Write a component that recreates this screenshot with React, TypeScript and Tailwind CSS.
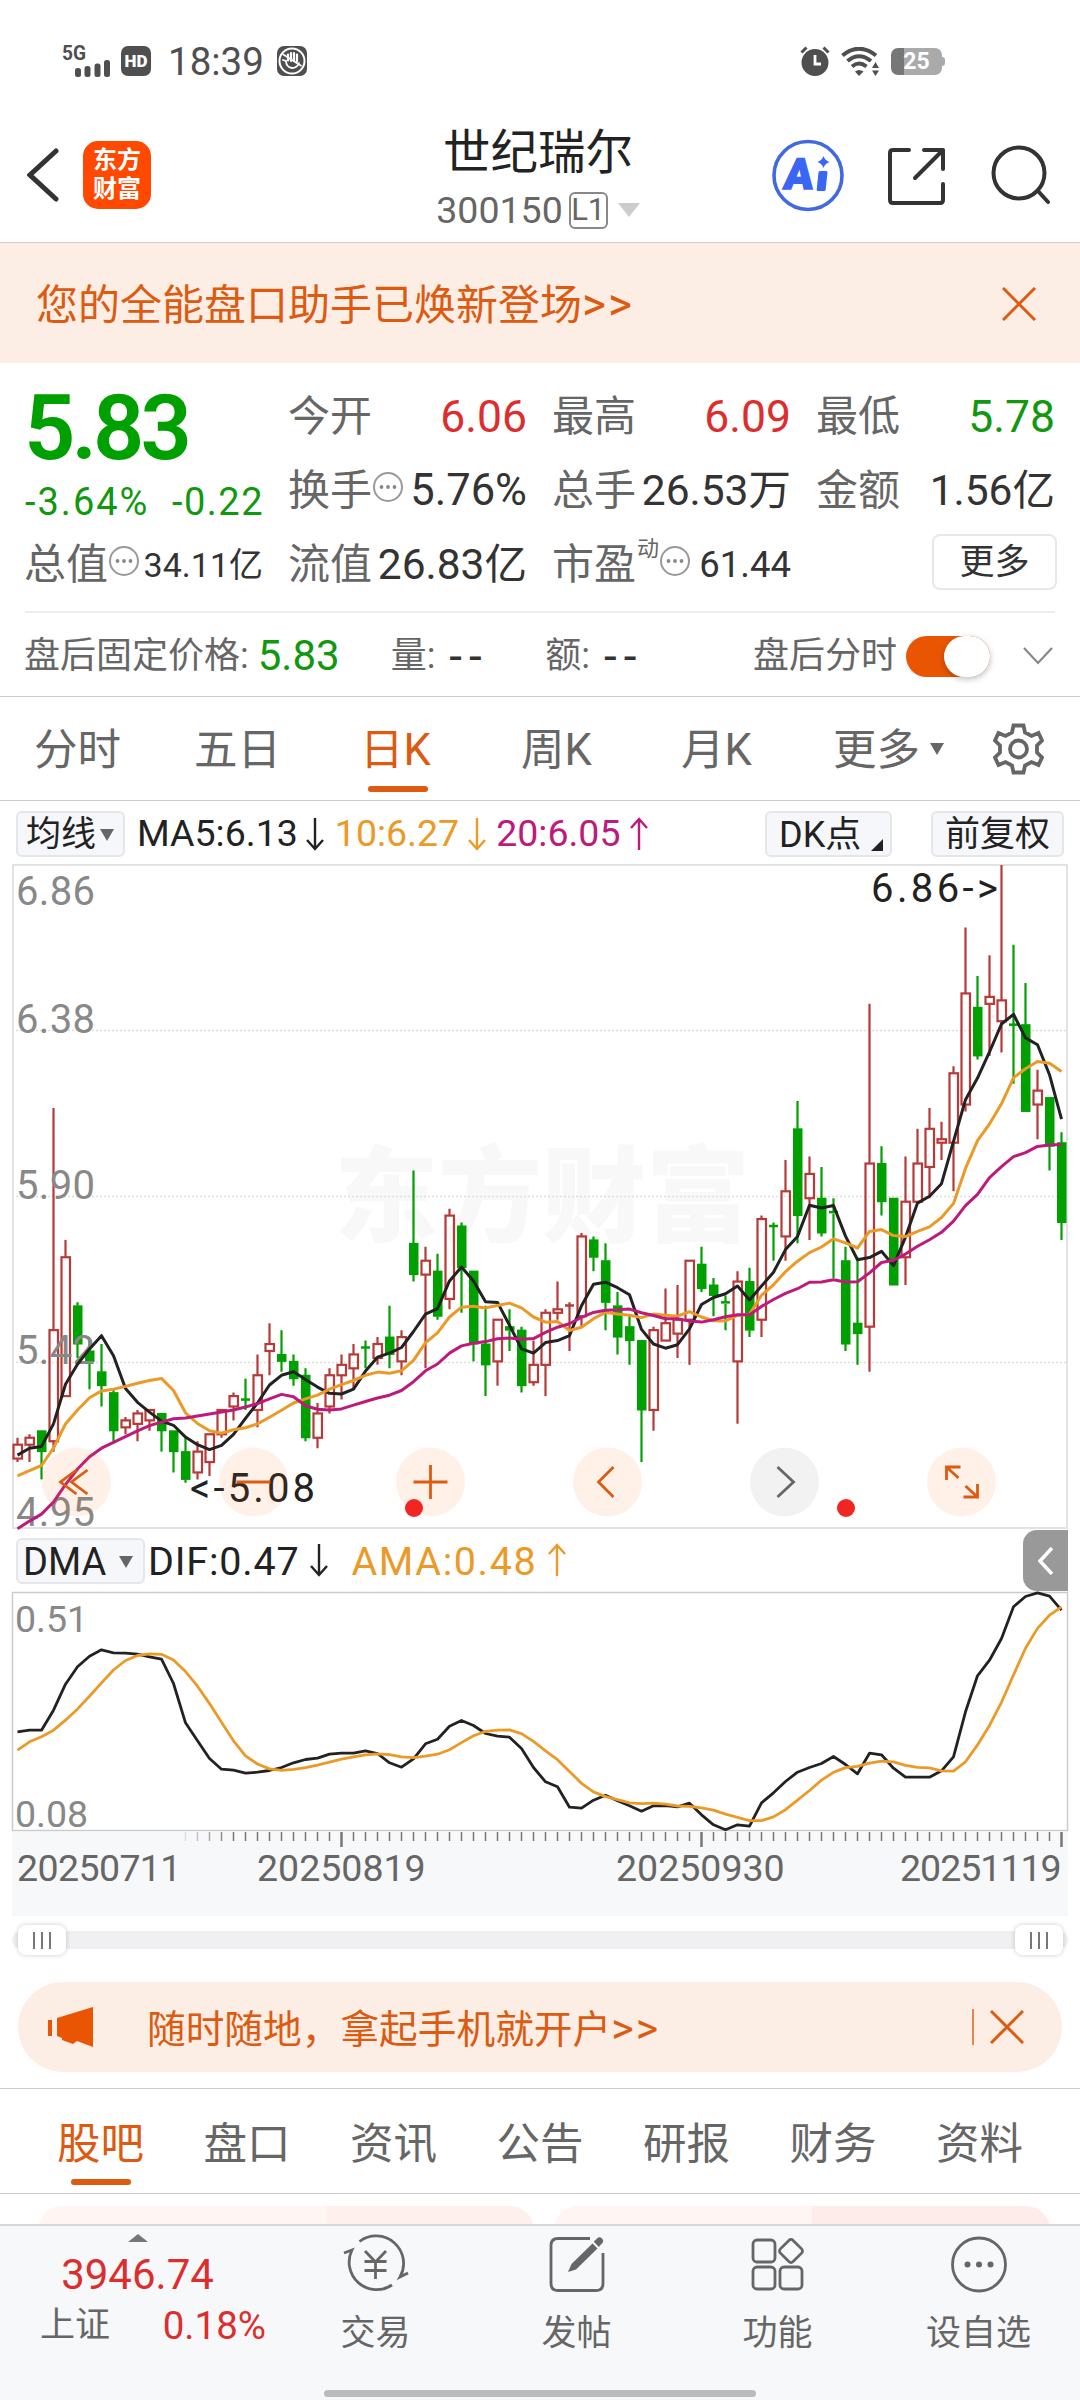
import type { ReactNode } from "react";

// open, close, high, low
type Candle = [number, number, number, number];

const CANDLES: Candle[] = [
  [5.15, 5.19, 5.21, 5.14], [5.19, 5.21, 5.22, 5.14], [5.23, 5.17, 5.23, 5.09], [5.2, 5.52, 6.16, 5.17],
  [5.33, 5.73, 5.78, 5.33], [5.59, 5.48, 5.6, 5.44], [5.46, 5.43, 5.49, 5.35], [5.4, 5.36, 5.48, 5.3],
  [5.34, 5.23, 5.35, 5.2], [5.24, 5.26, 5.27, 5.22], [5.25, 5.28, 5.29, 5.2], [5.26, 5.29, 5.29, 5.23],
  [5.28, 5.23, 5.28, 5.17], [5.23, 5.17, 5.23, 5.11], [5.17, 5.09, 5.21, 5.08], [5.11, 5.17, 5.2, 5.09],
  [5.14, 5.22, 5.22, 5.1], [5.22, 5.29, 5.29, 5.21], [5.3, 5.33, 5.34, 5.26], [5.32, 5.32, 5.38, 5.29],
  [5.29, 5.39, 5.45, 5.24], [5.46, 5.48, 5.54, 5.39], [5.45, 5.43, 5.52, 5.4], [5.43, 5.38, 5.45, 5.36],
  [5.39, 5.21, 5.41, 5.2], [5.21, 5.28, 5.31, 5.18], [5.3, 5.39, 5.41, 5.28], [5.39, 5.42, 5.45, 5.32],
  [5.41, 5.45, 5.48, 5.35], [5.47, 5.47, 5.49, 5.41], [5.44, 5.48, 5.5, 5.42], [5.5, 5.45, 5.59, 5.41],
  [5.43, 5.5, 5.52, 5.39], [5.77, 5.68, 5.98, 5.66], [5.68, 5.72, 5.76, 5.41], [5.69, 5.56, 5.74, 5.55],
  [5.61, 5.85, 5.87, 5.58], [5.82, 5.7, 5.83, 5.57], [5.69, 5.48, 5.69, 5.43], [5.48, 5.42, 5.59, 5.33],
  [5.43, 5.55, 5.55, 5.36], [5.53, 5.52, 5.58, 5.46], [5.52, 5.36, 5.53, 5.34], [5.37, 5.42, 5.49, 5.36],
  [5.42, 5.57, 5.58, 5.33], [5.57, 5.58, 5.66, 5.55], [5.59, 5.591, 5.6, 5.46], [5.56, 5.79, 5.8, 5.53],
  [5.78, 5.73, 5.79, 5.69], [5.72, 5.6, 5.77, 5.52], [5.59, 5.5, 5.63, 5.45], [5.53, 5.49, 5.56, 5.42],
  [5.49, 5.29, 5.49, 5.14], [5.29, 5.52, 5.53, 5.23], [5.49, 5.54, 5.64, 5.49], [5.51, 5.55, 5.65, 5.44],
  [5.55, 5.72, 5.72, 5.42], [5.71, 5.64, 5.76, 5.63], [5.65, 5.62, 5.67, 5.56], [5.6, 5.595, 5.62, 5.52],
  [5.43, 5.66, 5.69, 5.25], [5.66, 5.52, 5.7, 5.5], [5.55, 5.84, 5.85, 5.5], [5.82, 5.82, 5.83, 5.72],
  [5.79, 5.92, 6.01, 5.72], [6.1, 5.85, 6.18, 5.77], [5.9, 5.97, 6.02, 5.78], [5.9, 5.8, 5.99, 5.79],
  [5.86, 5.855, 5.9, 5.67], [5.72, 5.48, 5.76, 5.46], [5.54, 5.51, 5.73, 5.42], [5.53, 6, 6.46, 5.4],
  [6, 5.89, 6.05, 5.85], [5.9, 5.65, 5.9, 5.65], [5.73, 5.89, 6.02, 5.65], [5.89, 6, 6.1, 5.89],
  [5.99, 6.1, 6.16, 5.9], [6.06, 6.07, 6.12, 6.01], [6.06, 6.26, 6.28, 5.92], [6.17, 6.49, 6.68, 6.15],
  [6.45, 6.31, 6.54, 6.3], [6.46, 6.48, 6.6, 6.31], [6.41, 6.47, 6.86, 6.32], [6.4, 6.4, 6.63, 6.23],
  [6.4, 6.15, 6.52, 6.15], [6.17, 6.21, 6.27, 6.07], [6.19, 6.05, 6.19, 5.98], [6.06, 5.83, 6.09, 5.78],
];

// averages that reach back before the first visible day
const MA5_HEAD = [5.16, 5.18, 5.185, 5.25];
const MA10_HEAD = [5.1, 5.115, 5.13, 5.18, 5.25, 5.29, 5.325, 5.345, 5.35];
const MA20_HEAD = [
  4.948, 4.97, 4.99, 5.025, 5.075, 5.12, 5.155, 5.18, 5.197, 5.213, 5.23, 5.245, 5.255, 5.265, 5.267, 5.273, 5.278,
  5.284, 5.29,
];

// DIF line, offset from the top of the panel in thirds of a pixel
const DIF = [
  418, 413, 413, 353, 275, 223, 191, 172, 181, 182, 185, 193, 200, 273, 391, 445, 498, 530, 533, 542, 539, 534, 525,
  511, 501, 497, 485, 482, 482, 475, 483, 511, 524, 499, 454, 440, 401, 384, 399, 423, 431, 434, 468, 525, 568, 583,
  644, 647, 623, 608, 625, 640, 656, 640, 639, 643, 632, 667, 697, 712, 697, 701, 631, 601, 567, 539, 525, 513, 492,
  516, 544, 482, 487, 527, 554, 554, 554, 535, 493, 358, 250, 203, 138, 43, 12, 1, 11, 53,
];
const AMA_HEAD = [473, 448, 433, 413, 383];

const GREEN = "#00a000";
const RED = "#b73a38";
const px = (i: number) => 5.5 + i * 12;
const py = (price: number) => 1 + ((6.86 - price) / 1.91) * 663;

const average = (values: number[], size: number, head: number[]) =>
  values.map((_, i) => (i < size - 1 ? head[i] : values.slice(i - size + 1, i + 1).reduce((a, b) => a + b, 0) / size));

const toPoints = (values: number[], y: (v: number) => number) =>
  values.map((v, i) => `${px(i)},${y(v).toFixed(1)}`).join(" ");

const closes = CANDLES.map((c) => c[1]);

const Caret = ({ className = "" }: { className?: string }) => (
  <svg width="14" height="12" viewBox="0 0 14 12" className={className} fill="currentColor">
    <path d="M0 0h14L7 12Z" />
  </svg>
);

const Arrow = ({ up = false, className = "" }: { up?: boolean; className?: string }) => (
  <svg
    width="20"
    height="34"
    viewBox="0 0 20 34"
    className={`shrink-0 ${up ? "rotate-180" : ""} ${className}`}
    fill="none"
    stroke="currentColor"
    strokeWidth="2.4"
  >
    <path d="M10 1v31M2 23l8 9 8-9" />
  </svg>
);

const Dots = () => (
  <svg width="32" height="32" viewBox="0 0 32 32" className="-mt-2 shrink-0" fill="none" stroke="#999" strokeWidth="2">
    <circle cx="16" cy="16" r="14" />
    <g fill="#888" stroke="none">
      <circle cx="9.5" cy="16" r="1.9" />
      <circle cx="16" cy="16" r="1.9" />
      <circle cx="22.5" cy="16" r="1.9" />
    </g>
  </svg>
);

const Close = () => (
  <svg width="34" height="34" viewBox="0 0 34 34" fill="none" stroke="#dd5a10" strokeWidth="3">
    <path d="M1 1l32 32M33 1L1 33" />
  </svg>
);

const StatusBar = () => (
  <div className="flex h-[122px] items-center justify-between pl-[62px] pr-[135px] text-[#4f4f4f]">
    <div className="flex items-center">
      <svg width="50" height="34" viewBox="0 0 50 34" fill="currentColor" className="overflow-visible">
        <text x="0" y="16" fontSize="20" fontWeight="700" textLength="24" lengthAdjust="spacingAndGlyphs">
          5G
        </text>
        <rect x="13" y="24" width="6" height="9" rx="2.5" />
        <rect x="22.5" y="22" width="6" height="11" rx="2.5" />
        <rect x="32.5" y="19.5" width="6" height="13.5" rx="2.5" />
        <rect x="42" y="16" width="6" height="17" rx="2.5" />
      </svg>
      <div className="ml-[9px] flex size-[30px] items-center justify-center rounded-[7px] bg-[#4f4f4f] text-[17px] leading-none font-black text-white">
        HD
      </div>
      <span className="mt-[2px] ml-[17px] text-[38.5px] leading-none">18:39</span>
      <svg width="30" height="30" viewBox="0 0 30 30" className="ml-[13px]">
        <rect width="30" height="30" rx="7" fill="#4f4f4f" />
        <circle cx="15" cy="15" r="12.5" fill="none" stroke="#fff" strokeWidth="2" />
        <path
          d="M11 8.5v6M14 7v8M17 7v8M20 8.5v7"
          fill="none"
          stroke="#fff"
          strokeWidth="2.2"
          strokeLinecap="round"
        />
        <path d="M6 14l3 1q0 6 6 7 5 0 7-5" fill="none" stroke="#fff" strokeWidth="1.8" strokeLinecap="round" />
        <path d="M5.5 8l19 12" stroke="#fff" strokeWidth="1.6" />
      </svg>
    </div>
    <div className="flex items-center">
      <svg width="30" height="30" viewBox="0 0 30 30" fill="none">
        <circle cx="15" cy="16.5" r="13.5" fill="#4f4f4f" />
        <path d="M1.5 6.5l5-5M28.5 6.5l-5-5" stroke="#4f4f4f" strokeWidth="3" />
        <path d="M15 9v9h6" stroke="#fff" strokeWidth="2.8" />
      </svg>
      <svg width="38" height="29" viewBox="0 0 38 29" className="ml-[11px]" fill="none" stroke="#4f4f4f">
        <path d="M1.5 8.5Q18 -5 35 8.5" strokeWidth="4" />
        <path d="M6.5 14Q18 4.5 30 14" strokeWidth="4" />
        <path d="M11 19.5q7-6 14.5 0" strokeWidth="3.8" />
        <path d="M14 24.5q4-3 8.5 0L18 29Z" fill="#4f4f4f" stroke="none" />
        <path d="M34.5 15l3.5 6h-7ZM34.5 29l3.5-5.5h-7Z" fill="#4f4f4f" stroke="none" />
      </svg>
      <div className="ml-3 flex items-center">
        <div className="flex h-[27px] w-[51px] items-center justify-center rounded-[7px] bg-linear-to-r from-[#777] from-25% to-[#aaa] to-25% text-[23px] leading-none font-bold text-white">
          25
        </div>
        <div className="h-[9px] w-[3px] rounded-r bg-[#aaa]" />
      </div>
    </div>
  </div>
);

const Header = () => (
  <header className="flex h-[121px] items-start justify-between border-b border-[#ccc] pl-[27px] pr-[29px]">
    <div className="flex items-center pt-[19px]">
      <svg width="32" height="54" viewBox="0 0 32 54" fill="none" stroke="#333" strokeWidth="5" strokeLinecap="round">
        <path d="M29 3L3 27l26 24" />
      </svg>
      <div className="ml-6 flex size-[68px] flex-col items-center justify-center rounded-[15px] bg-[#ff4800] text-[24px] leading-[29px] font-bold text-white">
        <span>东方</span>
        <span>财富</span>
      </div>
    </div>
    <div className="ml-[154px] flex flex-col items-center">
      <h1 className="mt-[5px] text-[47.5px] leading-[52px] text-[#222]">世纪瑞尔</h1>
      <div className="mt-[12px] flex items-center text-[37.5px] leading-[38px] text-[#666]">
        <span>300150</span>
        <span className="ml-[6px] flex h-[37px] w-[39px] items-center justify-center rounded-[6px] border-2 border-[#888] text-[31px]">
          L1
        </span>
        <svg width="22" height="14" viewBox="0 0 22 14" className="ml-[10px]" fill="#ccc">
          <path d="M0 0h22L11 14Z" />
        </svg>
      </div>
    </div>
    <div className="flex items-center pt-[17px]">
      <svg width="74" height="74" viewBox="0 0 74 74" fill="#3a66f5">
        <circle cx="37" cy="36.5" r="34" fill="none" stroke="#4169e1" strokeWidth="3.6" />
        <g transform="skewX(-6)">
          <text x="17" y="50" fontSize="43" fontWeight="900" stroke="#3a66f5" strokeWidth="1.5">
            A
          </text>
          <rect x="51" y="32" width="9" height="20" rx="1.5" />
        </g>
        <path d="M52.5 17q1.5 4.5 6 6-4.5 1.5-6 6-1.5-4.5-6-6 4.5-1.5 6-6Z" />
      </svg>
      <svg
        width="60"
        height="60"
        viewBox="0 0 60 60"
        className="ml-[41px]"
        fill="none"
        stroke="#333"
        strokeWidth="4"
        strokeLinecap="round"
        strokeLinejoin="round"
      >
        <path d="M23 4H7Q4 4 4 7v47q0 3 3 3h47q3 0 3-3V38" />
        <path d="M38 4h19v19M57 4L29 32" />
      </svg>
      <svg
        width="62"
        height="62"
        viewBox="0 0 62 62"
        className="ml-[43px]"
        fill="none"
        stroke="#333"
        strokeWidth="4"
        strokeLinecap="round"
      >
        <circle cx="30" cy="28" r="25.5" />
        <path d="M49 46l10 11" />
      </svg>
    </div>
  </header>
);

const Row = ({ label, value, className = "text-[#333]" }: { label: ReactNode; value: string; className?: string }) => (
  <div className="flex h-[74px] items-center justify-between whitespace-nowrap">
    <span className="-ml-px flex items-center text-[42px] leading-none text-[#666]">{label}</span>
    <span className={`leading-none ${className}`}>{value}</span>
  </div>
);

const Quote = () => (
  <section className="h-[333px] px-[25px] pt-[17px]">
    <div className="grid grid-cols-4 gap-x-[26px] text-[44.5px]">
      <div className="row-span-2">
        <div className="-ml-px text-[90px] leading-[98px] font-semibold tracking-[-4px] text-[#00a000]">5.83</div>
        <div className="mt-[4px] flex justify-between text-[38px] leading-[40px] text-[#11980f]">
          <span className="tracking-[2px]">-3.64%</span>
          <span className="-mr-px tracking-[1.5px]">-0.22</span>
        </div>
      </div>
      <Row label="今开" value="6.06" className="text-[#dc2e2e]" />
      <Row label="最高" value="6.09" className="text-[#dc2e2e]" />
      <Row label="最低" value="5.78" className="text-[#11980f]" />
      <Row label={<>换手<Dots /></>} value="5.76%" className="text-[43.5px] text-[#333]" />
      <Row label="总手" value="26.53万" className="text-[42.5px] text-[#333]" />
      <Row label="金额" value="1.56亿" className="text-[42.5px] text-[#333]" />
      <Row label={<>总值<Dots /></>} value="34.11亿" className="text-[34px] text-[#333]" />
      <Row label="流值" value="26.83亿" className="text-[42.5px] text-[#333]" />
      <Row
        label={
          <>
            市盈<span className="-mt-8 ml-px text-[22px]">动</span>
            <Dots />
          </>
        }
        value="61.44"
        className="text-[36.5px] text-[#333]"
      />
      <div className="flex items-center justify-end">
        <button className="-mt-[6px] -mr-[2px] h-[56px] w-[125px] rounded-[8px] border-2 border-[#e8e8e8] text-[35px] leading-none text-[#333]">
          更多
        </button>
      </div>
    </div>
    <div className="mt-[9px] flex h-[85px] items-center border-t-2 border-[#ededed] pt-[3px] text-[36px] leading-none whitespace-nowrap text-[#666]">
      <span className="-ml-px">盘后固定价格:</span>
      <span className="ml-[9px] text-[42px] text-[#11980f]">5.83</span>
      <span className="ml-[51px]">量:</span>
      <span className="ml-[14px] w-[40px] text-[46px] tracking-[7px] text-[#333]">--</span>
      <span className="ml-[56px]">额:</span>
      <span className="ml-[14px] w-[40px] text-[46px] tracking-[7px] text-[#333]">--</span>
      <span className="ml-auto">盘后分时</span>
      <span className="ml-[9px] flex h-[41px] w-[84px] justify-end rounded-full bg-[#ea5504]">
        <span className="h-[41px] w-[46px] rounded-full bg-white shadow-[0_2px_6px_rgba(0,0,0,0.25)]" />
      </span>
      <svg width="30" height="18" viewBox="0 0 30 18" className="mr-[2px] ml-[33px]" fill="none" stroke="#888" strokeWidth="2.2">
        <path d="M1 1l14 15L29 1" />
      </svg>
    </div>
  </section>
);

const Gear = () => (
  <svg width="51" height="52" viewBox="0 0 51 52" className="-mt-[5px]" fill="none" stroke="#666" strokeWidth="3.8">
    <path d="M20.5 2.500h10L32 9.500l6.500 3.500 7-3 3.500 7.500-5 5v7l5 5-3.500 7.500-7-3-6.500 3.500-1.500 7h-10l-1.500-7-6.500-3.500-7 3L2 34.500l5-5v-7l-5-5L5.500 10l7 3L19 9.500Z" />
    <circle cx="25.5" cy="26" r="8.5" />
  </svg>
);

const PeriodTabs = () => (
  <nav className="flex h-[105px] items-center border-y border-[#ccc] pt-[5px] pl-[34px] text-[43.5px] leading-none whitespace-nowrap text-[#666]">
    <span className="w-[160px]">分时</span>
    <span className="w-[166px]">五日</span>
    <span className="relative w-[161px] text-[#dd5a10]">
      日K
      <span className="absolute top-[57px] left-[8px] h-[6px] w-[60px] rounded-full bg-[#dd5a10]" />
    </span>
    <span className="w-[160px]">周K</span>
    <span className="w-[152px]">月K</span>
    <span className="flex w-[160px] items-center">
      更多
      <Caret className="ml-[10px] -mt-1" />
    </span>
    <Gear />
  </nav>
);

const chip =
  "flex h-[46px] items-center rounded-[6px] border-2 border-[#e4e6ea] bg-[#f6f7fa] pt-[2px] leading-none text-[#222]";

const FLOAT_BUTTONS: { icon: ReactNode; muted?: boolean }[] = [
  { icon: <path d="M35 23L19 35l16 12M46 23L30 35l16 12" /> },
  { icon: <path d="M18 35h34" /> },
  { icon: <path d="M18 35h34M35 18v34" /> },
  { icon: <path d="M41 20L26 35l15 15" /> },
  { icon: <path d="M28 20l16 15-16 15" />, muted: true },
  { icon: <path d="M20 33V20h14M20 20l12 11M51 37v13H37M51 50L39 39" /> },
];

const KLine = () => (
  <section className="relative mx-3 h-[665px]">
    <svg width="1056" height="665" viewBox="0 0 1056 665" className="overflow-visible">
      <text x="322" y="370" fontSize="104" fontWeight="900" fill="#f8f8f8">
        东方财富
      </text>
      <g stroke="#ddd" strokeWidth="1.5" strokeDasharray="2 2">
        <path d="M0 166.5h1055M0 332.5h1055M0 498.5h1055" />
      </g>
      <rect x="1" y="1" width="1054" height="663" fill="none" stroke="#e2e2e2" strokeWidth="2" />
      {CANDLES.map(([open, close, high, low], i) => {
        const up = close > open;
        const top = py(Math.max(open, close));
        const bottom = py(Math.min(open, close));
        const color = up ? RED : GREEN;
        return (
          <g key={i} stroke={color} strokeWidth="2.2">
            <path d={`M${px(i)} ${py(high)}V${top}M${px(i)} ${bottom}V${py(low)}`} />
            {bottom - top < 2.5 ? (
              <path d={`M${px(i) - 4.5} ${top}h9`} strokeWidth="2.5" />
            ) : up ? (
              <rect x={px(i) - 4} y={top} width="8.5" height={bottom - top} fill="none" />
            ) : (
              <rect x={px(i) - 4.5} y={top - 0.5} width="9.5" height={bottom - top + 1} fill={color} stroke="none" />
            )}
          </g>
        );
      })}
      <g fontSize="40" fill="#888">
        <text x="4" y="41" textLength="79">6.86</text>
        <text x="4" y="169" textLength="79">6.38</text>
        <text x="4" y="335" textLength="79">5.90</text>
        <text x="4" y="500" textLength="79">5.42</text>
        <text x="4" y="662" textLength="79">4.95</text>
      </g>
      <g fill="none" strokeWidth="3" strokeLinejoin="round">
        <polyline points={toPoints(average(closes, 5, MA5_HEAD), py)} stroke="#222" />
        <polyline points={toPoints(average(closes, 10, MA10_HEAD), py)} stroke="#ec9a27" />
        <polyline points={toPoints(average(closes, 20, MA20_HEAD), py)} stroke="#bd1a7b" />
      </g>
      <g fontSize="40" fill="#222">
        <text x="178" y="638" textLength="125">{"<-5.08"}</text>
        <text x="859" y="38" textLength="127">{"6.86->"}</text>
      </g>
      <g>
        {FLOAT_BUTTONS.map(({ icon, muted }, i) => (
          <g key={i} transform={`translate(${29.5 + i * 177} 583)`}>
            <circle cx="35" cy="35" r="34.5" fill={muted ? "rgba(0,0,0,0.05)" : "rgba(255,102,0,0.09)"} />
            <g fill="none" stroke={muted ? "#666" : "#dd5a10"} strokeWidth="2.8">
              {icon}
            </g>
          </g>
        ))}
      </g>
      <circle cx="402" cy="644" r="9" fill="#f12622" />
      <circle cx="834" cy="644" r="9" fill="#f12622" />
    </svg>
  </section>
);

const Dma = () => (
  <section className="mx-3 mt-px">
    <svg width="1056" height="240" viewBox="0 0 1056 240" className="block overflow-visible">
      <rect x="0.5" y="0.5" width="1055" height="238" fill="none" stroke="#ccc" strokeWidth="1.5" />
      <g fontSize="37.5" fill="#888">
        <text x="3" y="40">0.51</text>
        <text x="3" y="235">0.08</text>
      </g>
      <g fill="none" strokeWidth="2.8" strokeLinejoin="round">
        <polyline points={toPoints(DIF, (v) => v / 3 + 0.5)} stroke="#222" />
        <polyline points={toPoints(average(DIF, 6, AMA_HEAD), (v) => v / 3 + 0.5)} stroke="#ec9a27" />
      </g>
    </svg>
    <div className="h-[84px] bg-[#f7f8fa]">
      <svg width="1056" height="16" viewBox="0 0 1056 16" className="block" stroke="#777">
        {CANDLES.map((_, i) =>
          i < 14 ? null : i % 30 === 27 ? (
            <path key={i} d={`M${px(i)} 0v15`} strokeWidth="2.5" />
          ) : (
            <path key={i} d={`M${px(i)} 0v9`} strokeWidth="1.5" opacity={Math.min(1, (i - 13) / 5)} />
          ),
        )}
      </svg>
      <div className="flex pl-[5px] text-[37.5px] leading-[41px] text-[#666]">
        <span className="w-[240px] tracking-[-0.6px]">20250711</span>
        <span className="w-[359px]">20250819</span>
        <span className="w-[284px]">20250930</span>
        <span className="tracking-[-1px]">20251119</span>
      </div>
    </div>
  </section>
);

const Grip = () => (
  <div className="flex h-[30px] w-[48px] items-center justify-center gap-[6px] rounded-[8px] bg-white shadow-[0_0_5px_rgba(0,0,0,0.2)]">
    <i className="h-[17px] w-[2px] bg-[#777]" />
    <i className="h-[17px] w-[2px] bg-[#777]" />
    <i className="h-[17px] w-[2px] bg-[#777]" />
  </div>
);

const INFO_TABS = ["股吧", "盘口", "资讯", "公告", "研报", "财务", "资料"];

const ACTIONS: { label: string; icon: ReactNode }[] = [
  {
    label: "交易",
    icon: (
      <>
        <path d="M16.5 8.5A27.5 27.5 0 0 1 57 44l8-4M49 52A27.5 27.5 0 0 1 9 17l-8 3" />
        <path d="M22 18l10.5 11L43 18M21.5 28.5h22M21.5 37.5h22M32.5 28v18" />
      </>
    ),
  },
  {
    label: "发帖",
    icon: (
      <>
        <path d="M46 5.5H14q-7 0-7 7v38q0 7 7 7h38q7 0 7-7V20" />
        <path d="M24 39l3.5-8 23-22.5q2 1 5 5L32 36.5Z" fill="#666" stroke="none" />
        <path d="M52.5 11l3-3" strokeWidth="7" strokeLinecap="round" />
        <path d="M48 8.5l6.5 6.5" stroke="#f7f8fa" strokeWidth="2" />
      </>
    ),
  },
  {
    label: "功能",
    icon: (
      <>
        <rect x="8" y="7" width="22" height="22" rx="4" />
        <rect x="8" y="34" width="22" height="22" rx="4" />
        <rect x="35" y="34" width="22" height="22" rx="4" />
        <rect x="37" y="9" width="18" height="18" rx="3" transform="rotate(45 46 18)" />
      </>
    ),
  },
  {
    label: "设自选",
    icon: (
      <>
        <circle cx="33" cy="31.5" r="26.5" />
        <g fill="#666" stroke="none">
          <circle cx="21.5" cy="31.5" r="3" />
          <circle cx="33" cy="31.5" r="3" />
          <circle cx="44.5" cy="31.5" r="3" />
        </g>
      </>
    ),
  },
];

const BottomBar = () => (
  <footer className="h-[176px] border-t-2 border-[#d6d8dc] bg-[#f7f8fa]">
    <div className="flex h-[164px]">
      <div className="flex w-[275px] flex-col items-center pt-2">
        <svg width="20" height="8" viewBox="0 0 20 8" fill="#777">
          <path d="M10 0l10 8H0Z" />
        </svg>
        <span className="mt-[9px] text-[42px] leading-[48px] text-[#dc2e2e]">3946.74</span>
        <div className="mt-[3px] ml-[31px] flex w-[226px] items-center justify-between text-[35px] leading-[48px] text-[#666]">
          上证
          <span className="text-[38.5px] text-[#dc2e2e]">0.18%</span>
        </div>
      </div>
      {ACTIONS.map(({ label, icon }) => (
        <div key={label} className="flex w-[201px] flex-col items-center pt-[7px]">
          <svg width="66" height="64" viewBox="0 0 66 64" fill="none" stroke="#666" strokeWidth="2.8">
            {icon}
          </svg>
          <span className="mt-[15px] text-[35px] leading-[44px] text-[#666]">{label}</span>
        </div>
      ))}
    </div>
    <div className="mx-auto h-[7px] w-[432px] rounded-full bg-[#bbb]" />
  </footer>
);

export default function App() {
  return (
    <div className="h-[2400px] w-[1080px] overflow-hidden bg-white font-[Roboto,'Noto_Sans_CJK_SC',sans-serif]">
      <StatusBar />
      <Header />
      <div className="flex h-[120px] items-center justify-between bg-[#fceee5] pt-[2px] pr-[44px] pl-[36px] text-[42px] leading-none text-[#dd5a10]">
        <span>
          您的全能盘口助手已焕新登场<span className="text-[46px] leading-none tracking-[2px]">&gt;&gt;</span>
        </span>
        <Close />
      </div>
      <Quote />
      <PeriodTabs />

      <div className="flex h-[63px] items-center pt-[2px] pr-4 pl-4 text-[37.5px] leading-none">
        <div className={`${chip} w-[109px] pl-[8px] text-[35px]`}>
          均线
          <Caret className="ml-[4px] text-[#666]" />
        </div>
        <span className="ml-[12px] text-[#222]">MA5:6.13</span>
        <Arrow className="ml-[7px] text-[#222]" />
        <span className="ml-[10px] text-[#ec9a27]">10:6.27</span>
        <Arrow className="ml-[8px] text-[#ec9a27]" />
        <span className="ml-[9px] text-[#bd1a7b]">20:6.05</span>
        <Arrow up className="ml-[8px] text-[#bd1a7b]" />
        <div className={`${chip} ml-auto w-[127px] pl-[12px] text-[36px]`}>
          DK点
          <svg width="12" height="12" viewBox="0 0 12 12" className="mt-5 ml-[10px]" fill="#222">
            <path d="M12 0v12H0Z" />
          </svg>
        </div>
        <div className={`${chip} ml-[39px] w-[133px] justify-center text-[35px]`}>前复权</div>
      </div>
      <KLine />

      <div className="flex h-[62px] items-center pr-3 pl-4 text-[39px] leading-none">
        <div className={`${chip} mt-px w-[129px] pl-[5px] text-[38px]`}>
          DMA
          <Caret className="ml-[13px] text-[#666]" />
        </div>
        <span className="mt-[3px] ml-[3px] text-[39.5px] tracking-[0.8px] text-[#222]">DIF:0.47</span>
        <Arrow className="ml-[10px] text-[#222]" />
        <span className="mt-[3px] ml-[22px] text-[39.5px] tracking-[1.6px] text-[#ec9a27]">AMA:0.48</span>
        <Arrow up className="ml-[10px] text-[#ec9a27]" />
        <div className="mt-px ml-auto flex h-[61px] w-[45px] items-center justify-center rounded-l-[14px] bg-[#999]">
          <svg width="16" height="28" viewBox="0 0 16 28" fill="none" stroke="#fff" strokeWidth="3.5">
            <path d="M14 1L2 14l12 13" />
          </svg>
        </div>
      </div>
      <Dma />

      <div className="mx-3 mt-[15px] flex h-[18px] items-center justify-between rounded-full bg-[#f0f0f2] pr-[5px] pl-[6px]">
        <Grip />
        <Grip />
      </div>

      <div className="mx-[18px] mt-[33px] flex h-[90px] items-center rounded-full bg-[#fceee5] pr-[38px] pl-[29px] text-[38.7px] leading-none text-[#dd5a10]">
        <svg width="48" height="40" viewBox="0 0 48 40" fill="#ea5504">
          <path d="M1 13h4v16H1zM10 11L46 0v40L30 34l-4 3-11-4v-2l-5-2Z" />
        </svg>
        <span className="mt-[2px] ml-[52px]">
          随时随地，拿起手机就开户<span className="text-[43px] leading-none tracking-[2px]">&gt;&gt;</span>
        </span>
        <span className="mr-[16px] ml-auto h-[36px] w-[2px] bg-[#dd5a10]/70" />
        <Close />
      </div>

      <nav className="mt-[16px] flex h-[106px] items-center justify-between border-y border-[#ccc] pt-[7px] pr-[57px] pl-[57px] text-[43.5px] leading-none text-[#666]">
        {INFO_TABS.map((tab, i) => (
          <span key={tab} className={i === 0 ? "relative text-[#dd5a10]" : ""}>
            {tab}
            {i === 0 && <span className="absolute top-[56px] left-[14px] h-[6px] w-[60px] rounded-full bg-[#dd5a10]" />}
          </span>
        ))}
      </nav>
      <div className="flex h-[30px] gap-5 overflow-hidden px-[38px] pt-[12px]">
        <div className="h-[60px] w-[496px] shrink-0 rounded-[24px] bg-linear-to-r from-[#fff5f3] from-58% to-[#fef0ed] to-58%" />
        <div className="h-[60px] w-[496px] shrink-0 rounded-[24px] bg-linear-to-r from-[#fff5f3] from-52% to-[#fdecea] to-52%" />
      </div>
      <BottomBar />
    </div>
  );
}
